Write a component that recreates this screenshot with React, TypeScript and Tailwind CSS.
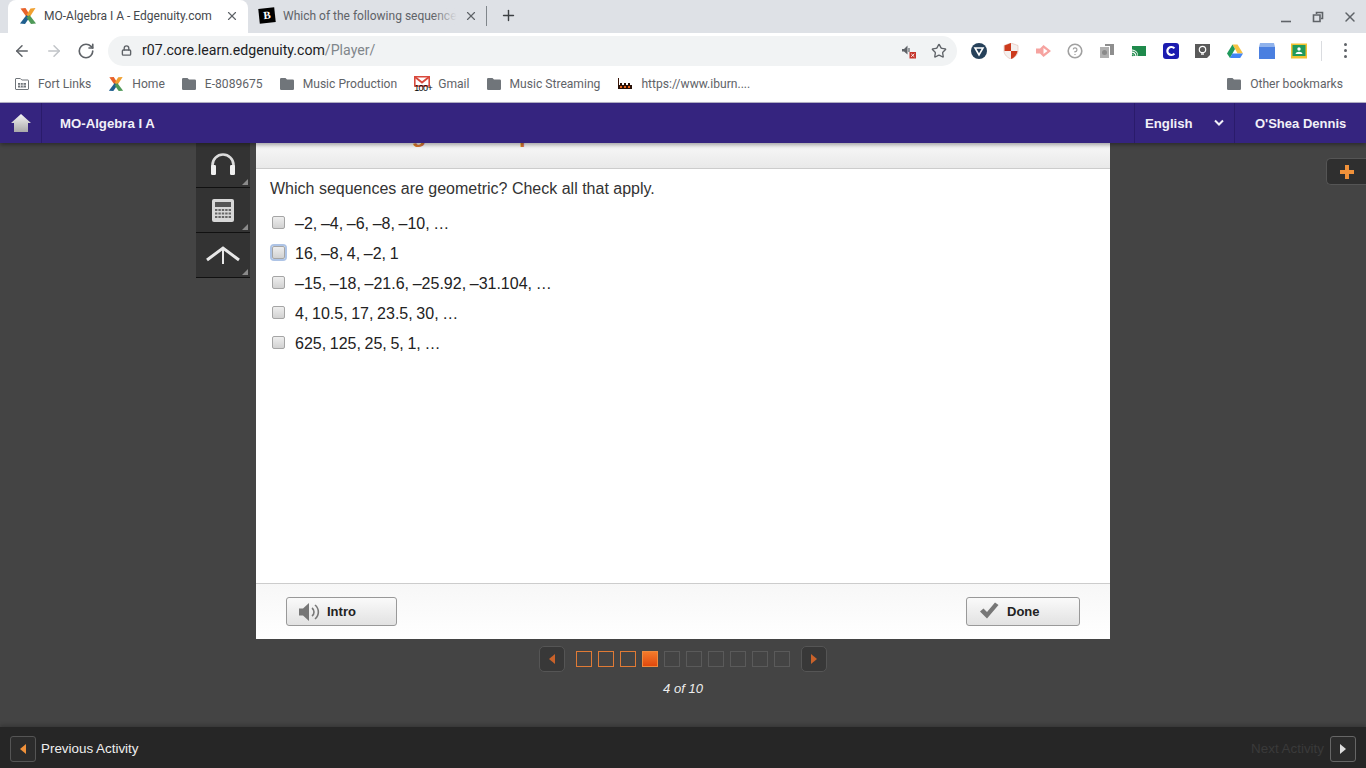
import React from "react";
import { ArrowLeft, ArrowRight, RotateCw, Lock, Star, X, Plus } from "lucide-react";

const uiFont = "font-['Roboto',sans-serif]";

function EdgeLogo({ size = 18 }: { size?: number }) {
  return (
    <svg width={size} height={size} viewBox="0 0 18 18" className="shrink-0">
      <path d="M1.5 1.5 L6.5 1 L10.5 7.5 L7.5 10 Z" fill="#e8622a" />
      <path d="M16.5 1 L11.5 1.5 L7.5 8 L10.5 10.5 Z" fill="#f0a030" />
      <path d="M1 16.5 L6 17 L10.5 10.5 L7.5 8 Z" fill="#1f5f8f" />
      <path d="M17 16.5 L12 17 L7.5 10.5 L10.5 8 Z" fill="#4f9a58" />
    </svg>
  );
}

function Folder() {
  return (
    <svg width="14" height="12" viewBox="0 0 14 12" className="mr-px shrink-0">
      <path d="M1.2 0 H5.5 L7 1.6 H12.8 A1.2 1.2 0 0 1 14 2.8 V10.8 A1.2 1.2 0 0 1 12.8 12 H1.2 A1.2 1.2 0 0 1 0 10.8 V1.2 A1.2 1.2 0 0 1 1.2 0 Z" fill="#70757a" />
    </svg>
  );
}

function AppsFolder() {
  return (
    <svg width="14" height="12" viewBox="0 0 14 12" className="mr-px shrink-0">
      <path d="M1 .5 H5.3 L6.8 2 H13 A.6 .6 0 0 1 13.5 2.6 V11 A.6 .6 0 0 1 13 11.5 H1 A.6 .6 0 0 1 .5 11 V1 A.6 .6 0 0 1 1 .5 Z" fill="none" stroke="#70757a" />
      <path d="M3 5 H11 V9.5 H3 Z" fill="#70757a" />
      <path d="M5.5 5 V9.5 M8.2 5 V9.5 M3 7.2 H11" stroke="#fff" strokeWidth=".7" />
    </svg>
  );
}

function GmailIcon() {
  return (
    <span className="relative block h-[16px] w-[16px] shrink-0">
      <svg width="16" height="11" viewBox="0 0 16 11" className="block">
        <path d="M.8 .8 H15.2 V10 H.8 Z" fill="#fff" stroke="#d9493c" strokeWidth="1.6" />
        <path d="M1 1 L8 6.5 L15 1" fill="none" stroke="#d9493c" strokeWidth="1.8" />
      </svg>
      <span className="absolute left-0 top-[8px] font-['Liberation_Sans',sans-serif] text-[9px] leading-[9px] tracking-[-0.6px] text-black">100+</span>
    </span>
  );
}

function IburnIcon() {
  return (
    <svg width="16" height="12" viewBox="0 0 16 12" className="shrink-0">
      <path d="M1.5 0 V11" stroke="#3a1608" />
      <path d="M1 7 H3 V5 H5 V7 H7 V5 H9 V7 H11 V5 H13 V7 H15 V11 H1 Z" fill="#2a1208" />
      <path d="M3 8 H5 V10 H3 Z M7 8 H9 V10 H7 Z M11 8 H13 V10 H11 Z" fill="#e8661c" />
    </svg>
  );
}

const bookmarks: { icon: React.ReactNode; label: string }[] = [
  { icon: <AppsFolder />, label: "Fort Links" },
  { icon: <EdgeLogo size={16} />, label: "Home" },
  { icon: <Folder />, label: "E-8089675" },
  { icon: <Folder />, label: "Music Production" },
  { icon: <GmailIcon />, label: "Gmail" },
  { icon: <Folder />, label: "Music Streaming" },
  { icon: <IburnIcon />, label: "https://www.iburn...." },
];

// extension icons, all on a 16px box
const extensions: React.ReactNode[] = [
  <svg key="a" width="16" height="16" viewBox="0 0 16 16"><circle cx="8" cy="8" r="8" fill="#26415a" /><path d="M4 5 H12 L8 12 Z" fill="none" stroke="#fff" strokeWidth="1.6" /></svg>,
  <svg key="b" width="16" height="16" viewBox="0 0 16 16"><path d="M8 0 L15 2.5 V8 C15 12 11 15 8 16 C5 15 1 12 1 8 V2.5 Z" fill="#f4f0ee" stroke="#e3b9ad" strokeWidth=".6" /><path d="M8 0 L1.5 2.5 V8 H8 Z M8 8 H14.5 C14 12 11 15 8 16 Z" fill="#cc3a1c" /></svg>,
  <svg key="c" width="16" height="16" viewBox="0 0 16 16"><path d="M1 5.5 H5 L8.5 2 L16 8 L8.5 14 L5 10.5 H1 Z" fill="#f6a3a0" /><path d="M8.5 5 L12.5 8 L8.5 11 Z" fill="#fff" /></svg>,
  <svg key="d" width="16" height="16" viewBox="0 0 16 16"><circle cx="8" cy="8" r="6.8" fill="#fff" stroke="#a0a0a0" strokeWidth="1.6" /><path d="M6.2 6.4 A1.9 1.9 0 1 1 8 8.6 V9.6 M8 11 V12" fill="none" stroke="#a0a0a0" strokeWidth="1.2" /></svg>,
  <svg key="e" width="16" height="16" viewBox="0 0 16 16"><path d="M1 4 H10 V15 H1 Z" fill="#b0b0b0" /><path d="M6 1 H15 V12 H11 V3 H6 Z" fill="#8e8e8e" /><circle cx="5.5" cy="9.5" r="2.5" fill="#8a8a8a" /></svg>,
  <svg key="f" width="16" height="16" viewBox="0 0 16 16"><path d="M1 3 H15 V13 H7 C7 9 5 7 1 6.5 Z" fill="#1f8a4c" /><path d="M1 8 A5 5 0 0 1 6 13 M1 10.2 A2.8 2.8 0 0 1 3.8 13" fill="none" stroke="#1f8a4c" strokeWidth="1.1" /><circle cx="1.8" cy="12.2" r="1" fill="#1f8a4c" /></svg>,
  <svg key="g" width="16" height="16" viewBox="0 0 16 16"><rect width="16" height="16" rx="3" fill="#1c1cb0" /><path d="M11.4 5.4 A4 4 0 1 0 11.4 10.6" fill="none" stroke="#fff" strokeWidth="2.2" /></svg>,
  <svg key="h" width="16" height="16" viewBox="0 0 16 16"><path d="M0 1 H15 V12 L12 15 H0 Z" fill="#5a5a5a" /><circle cx="7.5" cy="6.5" r="3.2" fill="none" stroke="#fff" strokeWidth="1.2" /><path d="M6 11 H9" stroke="#fff" strokeWidth="1.4" /></svg>,
  <svg key="i" width="16" height="16" viewBox="0 0 16 16"><path d="M5.5 1.5 H10.5 L16 10.5 H10.6 Z" fill="#f6c343" /><path d="M5.5 1.5 L8 6 L3 15 L0 10.5 Z" fill="#1f9a5c" /><path d="M5.4 10.5 H16 L13.2 15 H3 Z" fill="#4285f4" /></svg>,
  <svg key="j" width="16" height="16" viewBox="0 0 16 16"><path d="M1 0 H15 L16 4 H0 Z" fill="#8fb2ec" /><path d="M0 4 H16 V16 H0 Z" fill="#4a7fe0" /></svg>,
  <svg key="k" width="16" height="16" viewBox="0 0 16 16"><rect width="16" height="15" y=".5" fill="#f2c231" /><rect x="1.5" y="2" width="13" height="11" fill="#1f9a5c" /><circle cx="8" cy="6" r="1.7" fill="#fff" /><path d="M4.5 11 C5 8 11 8 11.5 11 Z" fill="#fff" /></svg>,
];

const answers = [
  "–2, –4, –6, –8, –10, …",
  "16, –8, 4, –2, 1",
  "–15, –18, –21.6, –25.92, –31.104, …",
  "4, 10.5, 17, 23.5, 30, …",
  "625, 125, 25, 5, 1, …",
];

function Tab({ active, icon, title }: { active?: boolean; icon: React.ReactNode; title: string }) {
  return (
    <div className={`flex h-[33px] items-center pb-[2px] ${active ? "w-[240px] rounded-t-[8px] bg-white pl-[11px] pr-[9px]" : "w-[238px] pl-[11px] pr-[8px]"}`}>
      {icon}
      <span className={`relative ml-[7px] flex-1 overflow-hidden whitespace-nowrap text-[12px] ${active ? "text-[#45484c]" : "pl-px text-[#5f6368]"}`}>
        {title}
        {!active && <span className="absolute inset-y-0 right-0 w-[24px] bg-gradient-to-r from-transparent to-[#dee1e6]" />}
      </span>
      <X size={14} strokeWidth={2} className="ml-[7px] shrink-0 text-[#5f6368]" />
    </div>
  );
}

function ToolTile({ children }: { children: React.ReactNode }) {
  return (
    <div className="relative flex h-[45px] w-[54px] items-center justify-center border-b border-[#111] bg-[#333]">
      {children}
      <span className="absolute bottom-[2px] right-[2px] h-0 w-0 border-b-[6px] border-l-[6px] border-b-[#8a8a8a] border-l-transparent" />
    </div>
  );
}

function Arrow({ dir, className }: { dir: "left" | "right"; className: string }) {
  return (
    <span
      className={`h-0 w-0 border-y-[5px] border-y-transparent ${dir === "left" ? "border-r-[6px]" : "border-l-[6px]"} ${className}`}
    />
  );
}

export default function App() {
  return (
    <div className="flex h-screen w-full flex-col overflow-hidden bg-[#444] font-['Liberation_Sans',sans-serif]">
      {/* browser chrome */}
      <div className={`${uiFont} shrink-0`}>
        <div className="flex h-[33px] items-center bg-[#dee1e6] pl-[8px]">
          <Tab active icon={<EdgeLogo size={18} />} title="MO-Algebra I A - Edgenuity.com" />
          <Tab
            icon={
              <span className="flex h-[15px] w-[16px] shrink-0 -rotate-6 items-center justify-center bg-black font-['Liberation_Serif',serif] text-[11px] font-bold leading-none text-white">
                B
              </span>
            }
            title="Which of the following sequences"
          />
          <div className="mb-[2px] h-[20px] w-px bg-[#80868b]" />
          <Plus size={17} strokeWidth={2} className="mb-[2px] ml-[13px] text-[#3c4043]" />
          <div className="ml-auto flex items-center gap-[16px] pr-[8px] text-[#5f6368]">
            <svg width="16" height="16" viewBox="0 0 16 16" fill="none" stroke="currentColor" strokeWidth="1.6">
              <path d="M3 12.5 H13" />
            </svg>
            <svg width="16" height="16" viewBox="0 0 16 16" fill="none" stroke="currentColor" strokeWidth="1.6">
              <path d="M6.5 5 V3.5 H12.5 V9.5 H11" />
              <path d="M3.5 6 H10 V12.5 H3.5 Z" />
            </svg>
            <X size={16} strokeWidth={2.2} />
          </div>
        </div>

        <div className="flex h-[35px] items-center bg-white">
          <div className="flex w-[108px] items-center gap-[14px] pl-[13px] text-[#5f6368]">
            <ArrowLeft size={18} strokeWidth={2} />
            <ArrowRight size={18} strokeWidth={2} className="text-[#c1c4c8]" />
            <RotateCw size={18} strokeWidth={2.2} />
          </div>
          <div className="flex h-[30px] w-[849px] items-center rounded-full bg-[#f1f3f4] pl-[13px] pr-[10px]">
            <Lock size={11} strokeWidth={3} className="text-[#5f6368]" />
            <span className="ml-[10px] pt-px text-[14.15px] text-[#202124]">
              r07.core.learn.edgenuity.com<span className="text-[#80868b]">/Player/</span>
            </span>
            <svg width="16" height="16" viewBox="0 0 16 16" className="ml-auto">
              <path d="M1 6 H3 L6.5 2.5 V11.5 L3 8.5 H1 Z" fill="#5f6368" />
              <path d="M8 5 V9" stroke="#5f6368" strokeWidth="1.2" />
              <rect x="8.5" y="9" width="6.5" height="6.5" fill="#c5352b" />
              <path d="M10.2 10.8 L13.3 13.8 M13.3 10.8 L10.2 13.8" stroke="#fff" strokeWidth=".9" />
            </svg>
            <Star size={16} strokeWidth={2} className="ml-[14px] text-[#5f6368]" />
          </div>
          <div className="ml-[14px] flex items-center gap-[16px]">{extensions}</div>
          <div className="ml-[14px] h-[20px] w-px bg-[#dadce0]" />
          <div className="ml-[22px] flex flex-col gap-[3px]">
            <span className="h-[3px] w-[3px] rounded-full bg-[#5f6368]" />
            <span className="h-[3px] w-[3px] rounded-full bg-[#5f6368]" />
            <span className="h-[3px] w-[3px] rounded-full bg-[#5f6368]" />
          </div>
        </div>

        <div className="flex h-[35px] items-center gap-[17px] border-b border-[#b7b3c9] bg-white pb-px pl-[15px] pr-[23px] text-[12.1px] text-[#5f6368]">
          {bookmarks.map((b) => (
            <div key={b.label} className="flex items-center gap-[8px]">
              {b.icon}
              <span>{b.label}</span>
            </div>
          ))}
          <div className="ml-auto flex items-center gap-[8px]">
            <Folder />
            <span>Other bookmarks</span>
          </div>
        </div>
      </div>

      {/* course header */}
      <header className="z-10 flex h-[40px] shrink-0 items-center bg-[#35247f] text-[13.2px] font-bold text-[#f2f0f8] shadow-[0_2px_4px_rgba(0,0,0,0.35)]">
        <div className="flex h-full w-[42px] items-center justify-center border-r border-[#2a1b6b]">
          <svg width="20" height="20" viewBox="0 0 20 20">
            <defs>
              <linearGradient id="homeFill" x1="0" y1="0" x2="0" y2="1">
                <stop offset="0" stopColor="#f5f5f5" />
                <stop offset="1" stopColor="#a9a9a9" />
              </linearGradient>
            </defs>
            <path d="M10 1 L20 10 H17 V19 H3 V10 H0 Z" fill="url(#homeFill)" />
          </svg>
        </div>
        <span className="ml-[18px] pt-px">MO-Algebra I A</span>
        <div className="ml-auto flex h-full w-[100px] items-center border-l border-[#2a1b6b] pl-[10px]">
          <span className="pt-px">English</span>
          <svg width="10" height="8" viewBox="0 0 10 8" className="ml-[21px]" fill="none" stroke="#f2f0f8" strokeWidth="2">
            <path d="M1 1.5 L5 5.5 L9 1.5" />
          </svg>
        </div>
        <div className="flex h-full w-[132px] items-center border-l border-[#2a1b6b] pl-[20px] pt-px text-[13px]">O'Shea Dennis</div>
      </header>

      {/* player */}
      <main className="flex min-h-0 flex-1">
        <div className="ml-[196px] flex w-[54px] shrink-0 flex-col self-start">
          <ToolTile>
            <svg width="28" height="24" viewBox="0 0 28 24" fill="none">
              <path d="M3.5 16 V12 A10.5 10.5 0 0 1 24.5 12 V16" stroke="#dcdcdc" strokeWidth="2.6" />
              <rect x="2" y="12" width="5" height="10" rx="1.2" fill="#f0f0f0" />
              <rect x="21" y="12" width="5" height="10" rx="1.2" fill="#f0f0f0" />
            </svg>
          </ToolTile>
          <ToolTile>
            <svg width="22" height="23" viewBox="0 0 22 23">
              <rect x="0" y="0" width="22" height="23" rx="2" fill="#d8d8d8" />
              <rect x="3" y="3" width="16" height="5" fill="#555" />
              <path d="M3 11 H19 M3 14.5 H19 M3 18 H19" stroke="#666" strokeWidth="2" strokeDasharray="2.4 1" />
            </svg>
          </ToolTile>
          <ToolTile>
            <svg width="34" height="22" viewBox="0 0 34 22" fill="none" stroke="#e8e8e8">
              <path d="M1 16 L17 4 L33 16" strokeWidth="3" />
              <path d="M17 4 V20" strokeWidth="2" />
            </svg>
          </ToolTile>
        </div>

        <div className="ml-[6px] flex w-[854px] shrink-0 flex-col">
          <section className="flex h-[496px] flex-col bg-white">
            {/* the title has scrolled up under the header, only its descenders show */}
            <div className="h-[26px] overflow-hidden border-b border-[#ccc] bg-gradient-to-b from-[#f8f8f8] to-[#e9e9e9]">
              <div className="-mt-[21px] whitespace-nowrap pl-px text-[24px] font-bold leading-[24px] text-[#d9772f] [word-spacing:3px]">
                Understanding the Sequences
              </div>
            </div>
            <div className="flex-1 pl-[14px] pt-[9px] text-[16px] text-[#222]">
              <p className="leading-[22px] text-[#333]">Which sequences are geometric? Check all that apply.</p>
              <ul className="mt-[9px] flex flex-col [word-spacing:-0.8px]">
                {answers.map((a, i) => (
                  <li key={a} className="flex h-[30px] items-center">
                    <span
                      className={`mb-[4px] ml-[2px] h-[13px] w-[13px] shrink-0 rounded-[2px] border border-[#a5a5a5] bg-gradient-to-b from-[#eee] to-[#d2d2d2] ${
                        i === 1 ? "shadow-[0_0_0_2px_#aec4e6]" : ""
                      }`}
                    />
                    <span className="ml-[10px]">{a}</span>
                  </li>
                ))}
              </ul>
            </div>
            <div className="flex h-[56px] items-center justify-between border-t border-[#ccc] bg-gradient-to-b from-[#f7f7f7] to-white pl-[30px] pr-[30px] text-[13px] font-bold text-[#222]">
              <button className="flex h-[29px] w-[111px] items-center rounded-[3px] border border-[#999] bg-gradient-to-b from-[#fafafa] to-[#e2e2e2] pl-[11px]">
                <svg width="22" height="20" viewBox="0 0 22 20" fill="none">
                  <path d="M1 6.5 H5 L11 1 V19 L5 13.5 H1 Z" fill="#777" />
                  <path d="M14 6 A5 5 0 0 1 14 14 M17 3 A9 9 0 0 1 17 17" stroke="#777" strokeWidth="1.6" />
                </svg>
                <span className="ml-[7px] pt-px">Intro</span>
              </button>
              <button className="flex h-[29px] w-[114px] items-center rounded-[3px] border border-[#999] bg-gradient-to-b from-[#fafafa] to-[#e2e2e2] pl-[12px]">
                <svg width="20" height="17" viewBox="0 0 20 17" className="mb-[3px]">
                  <path d="M1 9.5 L4.5 6.5 L8 10 L16 0.5 L19.5 3 L8 16.5 Z" fill="#777" />
                </svg>
                <span className="ml-[8px] pt-px">Done</span>
              </button>
            </div>
          </section>

          <div className="mt-[7px] flex items-center justify-center">
            <button className="flex h-[26px] w-[26px] items-center justify-center rounded-[5px] border border-[#555] bg-[#383838]">
              <Arrow dir="left" className="border-r-[#c9622a]" />
            </button>
            <div className="mx-[11px] flex gap-[6px]">
              {Array.from({ length: 10 }, (_, i) => (
                <span
                  key={i}
                  className={`h-[16px] w-[16px] border ${
                    i === 3
                      ? "border-[#f08a3c] bg-gradient-to-b from-[#f47a2a] to-[#e0480c]"
                      : i < 3
                        ? "border-[#e07a35]"
                        : "border-[#5a5a5a]"
                  }`}
                />
              ))}
            </div>
            <button className="flex h-[26px] w-[26px] items-center justify-center rounded-[5px] border border-[#555] bg-[#383838]">
              <Arrow dir="right" className="border-l-[#c9622a]" />
            </button>
          </div>
          <p className="mt-[9px] text-center text-[13px] italic leading-[16px] text-[#eee]">4 of 10</p>
        </div>

        <button className="ml-auto mt-[15px] flex h-[27px] w-[40px] items-center justify-center self-start rounded-l-[5px] border border-r-0 border-[#555] bg-[#2f2f2f]">
          <svg width="14" height="14" viewBox="0 0 14 14">
            <path d="M5 0 H9 V5 H14 V9 H9 V14 H5 V9 H0 V5 H5 Z" fill="#f0913a" />
          </svg>
        </button>
      </main>

      <footer className="flex h-[41px] shrink-0 items-center justify-between bg-[#262626] pl-[10px] pr-[10px] pt-[3px] text-[13.4px] shadow-[0_-2px_4px_rgba(0,0,0,0.2)]">
        <div className="flex items-center gap-[5px] text-[#eee]">
          <button className="flex h-[26px] w-[26px] items-center justify-center rounded-[3px] border border-[#555] bg-[#2c2c2c]">
            <Arrow dir="left" className="border-r-[#f0913a]" />
          </button>
          <span className="pt-px">Previous Activity</span>
        </div>
        <div className="flex items-center gap-[6px] text-[#3a3a3a]">
          <span className="pt-px">Next Activity</span>
          <button className="flex h-[26px] w-[26px] items-center justify-center rounded-[3px] border border-[#666] bg-[#2c2c2c]">
            <Arrow dir="right" className="border-l-[#ddd]" />
          </button>
        </div>
      </footer>
    </div>
  );
}
